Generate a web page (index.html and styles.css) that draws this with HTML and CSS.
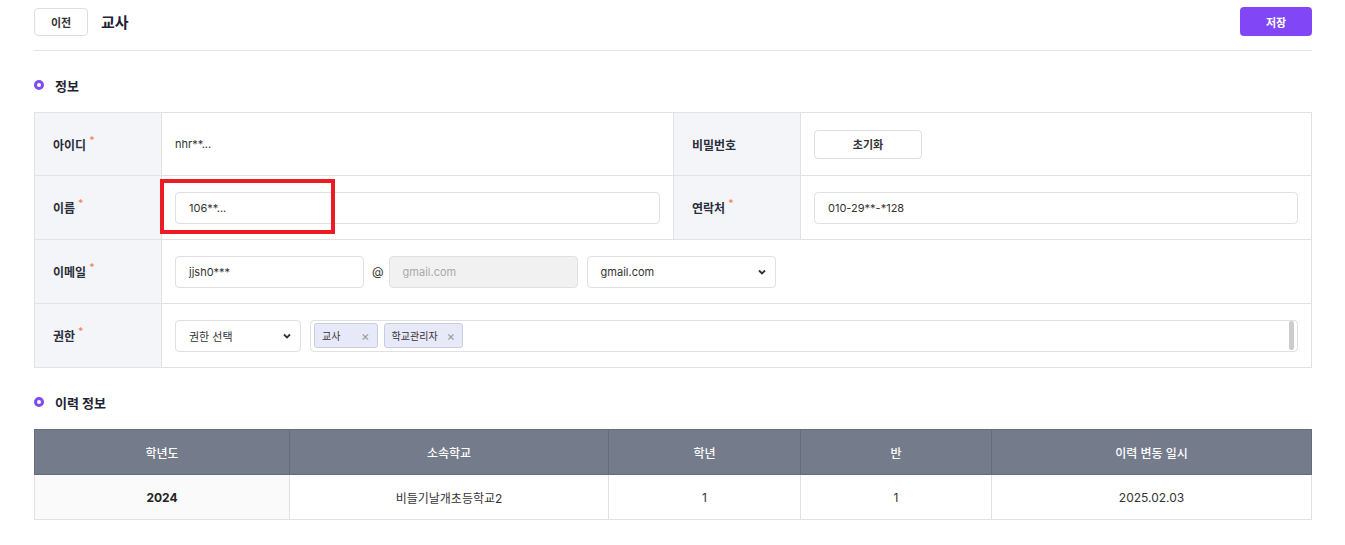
FILE: index.html
```html
<!DOCTYPE html>
<html lang="ko">
<head>
    <meta charset="utf-8">
    <title>교사</title>
    <link rel="stylesheet" href="styles.css">
</head>
<body>
    <div class="container">
        <div class="header">
            <div class="header-left">
                <button class="btn btn-back">이전</button>
                <h1>교사</h1>
            </div>
            <button class="btn btn-save">저장</button>
        </div>

        <div class="section-title"><span class="dot"></span>정보</div>

        <div class="info-table">
            <div class="cell label">아이디<span class="req">*</span></div>
            <div class="cell value"><span class="text">nhr**...</span></div>
            <div class="cell label">비밀번호</div>
            <div class="cell value"><button class="btn btn-reset">초기화</button></div>

            <div class="cell label">이름<span class="req">*</span></div>
            <div class="cell value mark-cell">
                <div class="input full">106**...</div>
                <div class="mark"></div>
            </div>
            <div class="cell label">연락처<span class="req">*</span></div>
            <div class="cell value"><div class="input full">010-29**-*128</div></div>

            <div class="cell label">이메일<span class="req">*</span></div>
            <div class="cell value wide">
                <div class="input mail">jjsh0***</div>
                <span class="at">@</span>
                <div class="input mail disabled">gmail.com</div>
                <div class="input mail select">gmail.com
                    <svg width="10" height="10" viewBox="0 0 10 10"><path d="M2 3.5 L5 6.5 L8 3.5" fill="none" stroke="#333" stroke-width="1.8"/></svg>
                </div>
            </div>

            <div class="cell label">권한<span class="req">*</span></div>
            <div class="cell value wide">
                <div class="input select role">권한 선택
                    <svg width="10" height="10" viewBox="0 0 10 10"><path d="M2 3.5 L5 6.5 L8 3.5" fill="none" stroke="#333" stroke-width="1.8"/></svg>
                </div>
                <div class="tag-box">
                    <span class="tag"><span class="tag-text">교사</span><span class="x">×</span></span>
                    <span class="tag"><span class="tag-text">학교관리자</span><span class="x">×</span></span>
                    <span class="scroll"></span>
                </div>
            </div>
        </div>

        <div class="section-title second"><span class="dot"></span>이력 정보</div>

        <table class="history">
            <thead>
                <tr>
                    <th class="c1">학년도</th>
                    <th class="c2">소속학교</th>
                    <th class="c3">학년</th>
                    <th class="c4">반</th>
                    <th>이력 변동 일시</th>
                </tr>
            </thead>
            <tbody>
                <tr>
                    <td class="year">2024</td>
                    <td>비들기날개초등학교2</td>
                    <td>1</td>
                    <td>1</td>
                    <td>2025.02.03</td>
                </tr>
            </tbody>
        </table>
    </div>
</body>
</html>
```

FILE: styles.css
```css
body {
    margin: 0;
    font-family: Inter, "Noto Sans CJK KR", sans-serif;
    color: #222;
    background: #fff;
}

.container {
    padding: 0 33px 0 34px;
}

.header {
    display: flex;
    justify-content: space-between;
    align-items: center;
    padding: 7px 0 14px;
    border-bottom: 1px solid #e4e4e4;
}

.header-left {
    display: flex;
    align-items: center;
    gap: 13px;
}

.header h1 {
    margin: 0;
    font-size: 15px;
    font-weight: 700;
    color: #1f2233;
}

.btn {
    font-family: inherit;
    font-size: 11px;
    font-weight: 600;
    border-radius: 4px;
    cursor: pointer;
}

.btn-back {
    width: 54px;
    height: 28px;
    background: #fff;
    border: 1px solid #dedede;
    color: #333;
}

.btn-save {
    width: 72px;
    height: 29px;
    background: #8146f6;
    border: none;
    color: #fff;
}

.section-title {
    display: flex;
    align-items: center;
    gap: 11px;
    height: 20px;
    margin: 24px 0 17px;
    font-size: 13px;
    font-weight: 700;
    color: #1f2233;
}

.section-title.second {
    margin: 24px 0 17px;
}

.dot {
    width: 4px;
    height: 4px;
    border: 3px solid #7d4cf3;
    border-radius: 50%;
}

.info-table {
    display: grid;
    grid-template-columns: 127px 512px 127px 1fr;
    grid-template-rows: 63px 64px 64px 64px;
    border-top: 1px solid #e2e2e2;
    border-left: 1px solid #e2e2e2;
}

.cell {
    display: flex;
    align-items: center;
    border-right: 1px solid #e2e2e2;
    border-bottom: 1px solid #e2e2e2;
    font-size: 12px;
}

.label {
    background: #f4f5f9;
    padding-left: 18px;
    font-size: 12px;
    font-weight: 600;
    color: #2a2d3a;
}

.req {
    color: #f5875c;
    font-size: 10px;
    margin-left: 3px;
    align-self: flex-start;
    margin-top: 21px;
}

.value {
    padding: 0 13px;
    gap: 9px;
}

.value .text {
    font-size: 11px;
    color: #333;
}

.wide {
    grid-column: span 3;
}

.btn-reset {
    width: 108px;
    height: 29px;
    background: #fff;
    border: 1px solid #dedede;
    color: #333;
}

.input {
    display: flex;
    align-items: center;
    box-sizing: border-box;
    height: 32px;
    padding: 0 13px;
    border: 1px solid #e0e0e0;
    border-radius: 4px;
    background: #fff;
    font-size: 11px;
    color: #333;
}

.input.full {
    width: 100%;
}

.mark-cell {
    position: relative;
}

.mark {
    position: absolute;
    left: -2px;
    top: 3px;
    width: 167px;
    height: 47px;
    border: 4px solid #ed1c24;
}

.input.mail {
    width: 189px;
}

.at {
    font-size: 12px;
    color: #333;
    margin: 0 -4px 0 -1px;
}

.input.disabled {
    background: #f1f1f1;
    color: #aaa;
}

.input.select {
    justify-content: space-between;
    padding-right: 8px;
}

.input.role {
    width: 126px;
}

.tag-box {
    display: flex;
    align-items: center;
    gap: 6px;
    box-sizing: border-box;
    flex: 1;
    height: 32px;
    padding: 0 3px;
    border: 1px solid #e0e0e0;
    border-radius: 4px;
}

.tag {
    display: flex;
    align-items: center;
    gap: 9px;
    height: 25px;
    box-sizing: border-box;
    padding: 0 7px;
    background: #e8e9f8;
    border: 1px solid #c9cce0;
    border-radius: 3px;
    font-size: 10px;
    color: #333;
}

.tag-text {
    min-width: 30px;
}

.tag .x {
    color: #999;
    font-size: 13px;
}

.scroll {
    margin-left: auto;
    width: 5px;
    height: 29px;
    background: #cccccc;
    border-radius: 3px;
}

.history {
    width: 100%;
    table-layout: fixed;
    border-collapse: collapse;
    font-size: 12px;
}

.history th {
    height: 44px;
    padding: 0;
    background: #747b8b;
    color: #fff;
    font-weight: 500;
    border: 1px solid #666c7a;
}

.history td {
    height: 44px;
    padding: 0;
    text-align: center;
    color: #333;
    border: 1px solid #e2e2e2;
}

.history .c1 { width: 254px; }
.history .c2 { width: 318px; }
.history .c3 { width: 191px; }
.history .c4 { width: 190px; }

.history td.year {
    background: #fafafa;
    font-weight: 700;
    color: #222;
}
```
